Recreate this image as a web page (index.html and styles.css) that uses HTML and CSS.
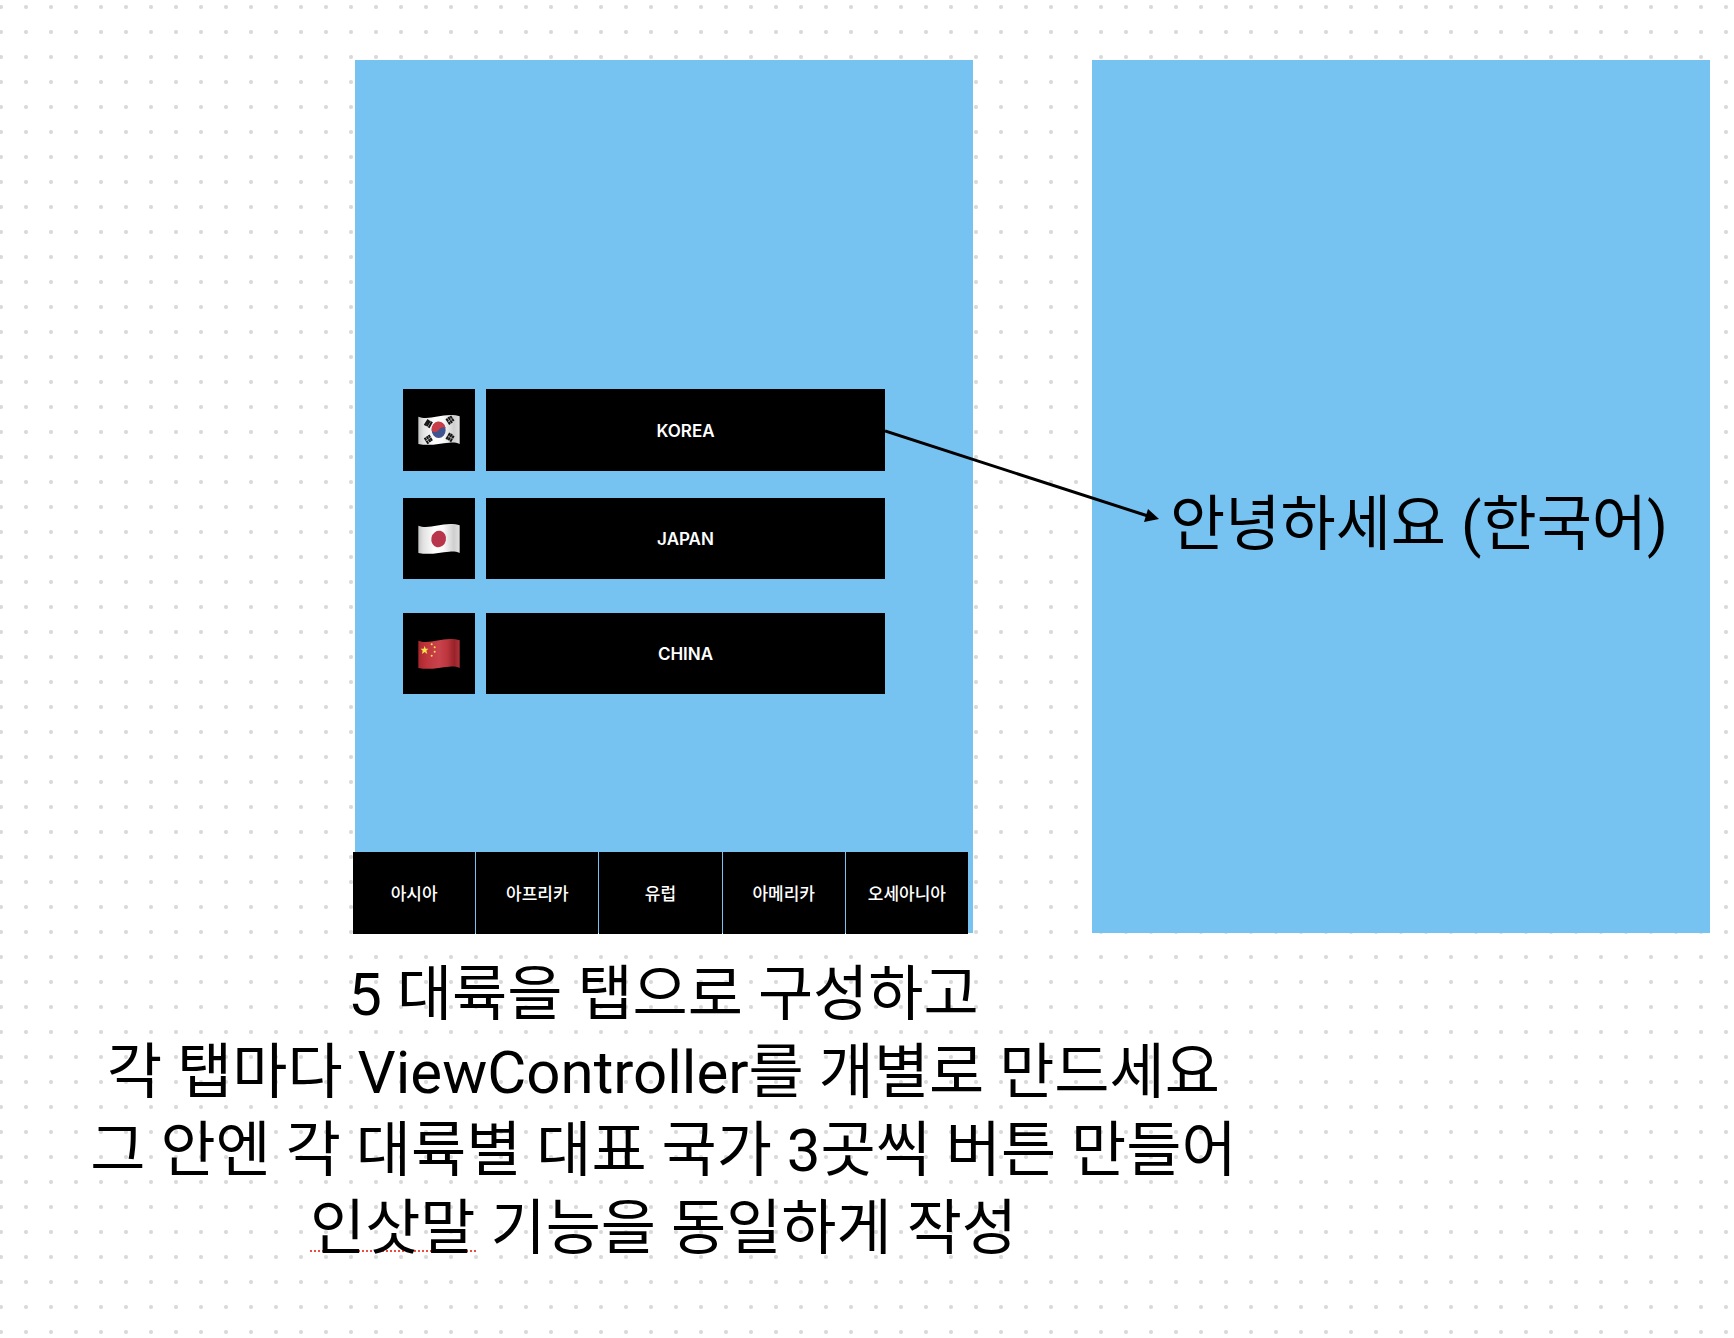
FILE: index.html
```html
<!DOCTYPE html>
<html lang="ko">
<head>
<meta charset="utf-8">
<meta name="viewport" content="width=device-width, initial-scale=1">
<title>5 대륙 인사말</title>
<link rel="stylesheet" href="styles.css">
</head>
<body>
<svg class="defs" aria-hidden="true">
  <defs>
    <linearGradient id="cloth" x1="0" x2="1" y1="0" y2="0">
      <stop offset="0" stop-color="#c4c4c4"/>
      <stop offset=".12" stop-color="#e2e2e2"/>
      <stop offset=".4" stop-color="#ffffff"/>
      <stop offset=".6" stop-color="#fafafa"/>
      <stop offset=".86" stop-color="#cfcfcf"/>
      <stop offset="1" stop-color="#e2e2e2"/>
    </linearGradient>
    <linearGradient id="red-cloth" x1="0" x2="1" y1="0" y2="0">
      <stop offset="0" stop-color="#a8262d"/>
      <stop offset=".2" stop-color="#c0353d"/>
      <stop offset=".5" stop-color="#c9434c"/>
      <stop offset=".7" stop-color="#bd363e"/>
      <stop offset=".87" stop-color="#98222a"/>
      <stop offset="1" stop-color="#b2323a"/>
    </linearGradient>
    <path id="wave" d="M1 5C28 16 62 0 96 0C108 0 118 1 125 4V87C116 83 106 82 94 83C64 85 36 94 1 87Z"/>
  </defs>
</svg>
<main class="board">
  <div class="screens">
    <section class="screen home" aria-label="아시아">
      <ul class="countries">
        <li class="country">
          <span class="flag">
            <svg viewBox="0 0 126 90" role="img" aria-label="대한민국">
              <use href="#wave" fill="url(#cloth)"/>
              <ellipse cx="62" cy="45" rx="21" ry="24" fill="#40558f"/>
              <path d="M41 47A21 24 0 0 1 83 40C77 34 68 37 62 45C56 53 47 53 41 47Z" fill="#c93d49"/>
              <g stroke="#151515" stroke-width="6">
                <path d="M20 31L31 14M26 34L36 17M32 38L42 20"/>
                <path d="M85 11L96 28M91 6L102 24M97 3L107 18"/>
                <path d="M20 68L31 86M26 64L37 81M32 60L42 77"/>
                <path d="M85 73L96 54M91 76L102 57M97 80L107 62"/>
              </g>
              <g stroke="#d4d4d4" stroke-width="2">
                <path d="M89 22L104 9M23 78L40 66M88 62L105 72"/>
              </g>
            </svg>
          </span>
          <button class="name" type="button">KOREA</button>
        </li>
        <li class="country">
          <span class="flag">
            <svg viewBox="0 0 126 90" role="img" aria-label="일본">
              <use href="#wave" fill="url(#cloth)"/>
              <ellipse cx="62" cy="45" rx="22" ry="25" fill="#b8354b" transform="rotate(12 62 45)"/>
            </svg>
          </span>
          <button class="name" type="button">JAPAN</button>
        </li>
        <li class="country">
          <span class="flag">
            <svg viewBox="0 0 126 90" role="img" aria-label="중국">
              <use href="#wave" fill="url(#red-cloth)"/>
              <g fill="#f7e34b">
                <path d="M20 20L23 29L31 29L25 35L28 45L20 39L12 45L14 35L8 29L17 29Z"/>
                <circle cx="41" cy="16" r="3"/>
                <circle cx="50" cy="25" r="3"/>
                <circle cx="50" cy="38" r="3"/>
                <circle cx="41" cy="50" r="3"/>
              </g>
            </svg>
          </span>
          <button class="name" type="button">CHINA</button>
        </li>
      </ul>
      <nav class="tabs" aria-label="대륙">
        <button class="tab" type="button">아시아</button>
        <button class="tab" type="button">아프리카</button>
        <button class="tab" type="button">유럽</button>
        <button class="tab" type="button">아메리카</button>
        <button class="tab" type="button">오세아니아</button>
      </nav>
      <svg class="arrow" viewBox="0 0 280 100" aria-hidden="true">
        <path d="M0 6L263 91" stroke="#000" stroke-width="3" fill="none"/>
        <path d="M263 84L274 94L259 97Z" fill="#000"/>
      </svg>
    </section>
    <section class="screen detail" aria-label="인사말">
      <p class="greeting">안녕하세요 (한국어)</p>
    </section>
  </div>
  <p class="note">
    5 대륙을 탭으로 구성하고<br>
    각 탭마다 ViewController를 개별로 만드세요<br>
    그 안엔 각 대륙별 대표 국가 3곳씩 버튼 만들어<br>
    <span class="typo">인삿말</span> 기능을 동일하게 작성
  </p>
</main>
</body>
</html>
```
FILE: styles.css
```css
* {
  box-sizing: border-box;
}

body {
  margin: 0;
  color: #000;
  font-family: Roboto, "Noto Sans CJK KR", sans-serif;
}

button {
  border: 0;
  padding: 0;
  background: #000;
  color: #fff;
  font: inherit;
}

.defs {
  position: absolute;
  width: 0;
  height: 0;
}

/* 25px dot grid */
.board {
  min-height: 100vh;
  padding-top: 60px;
  background: #fff radial-gradient(circle at 13px 13px, #d9d9d9 1.5px, transparent 2.5px) -12px -6px / 25px 25px;
}

.screens {
  display: flex;
  gap: 119px;
  padding: 0 24px 0 355px;
}

.screen {
  flex: 1;
  min-width: 0;
  min-height: 873px;
  background: #76c2f1;
}

.home {
  position: relative;
  display: flex;
  flex-direction: column;
}

.countries {
  display: flex;
  flex-direction: column;
  gap: 27px;
  margin: 0;
  padding: 329px 88px 0 48px;
  list-style: none;
}

.country {
  display: flex;
  gap: 11px;
  height: 81px;
}

.country:first-child {
  height: 82px;
}

.country:last-child {
  margin-top: 7px;
}

.flag {
  display: flex;
  align-items: center;
  justify-content: center;
  width: 72px;
  background: #000;
}

.flag svg {
  width: 42px;
  height: 30px;
}

.name {
  flex: 1;
  padding-top: 1px;
  font-family: Inter, sans-serif;
  font-size: 17px;
  font-weight: 600;
}

.tabs {
  display: grid;
  grid-template-columns: repeat(5, 1fr);
  gap: 1px;
  height: 82px;
  margin: auto 5px -1px -2px;
}

.tab {
  padding-bottom: 2px;
  font-size: 17px;
  font-weight: 500;
}

.arrow {
  position: absolute;
  top: 365px;
  left: calc(100% - 88px);
  z-index: 1;
  width: 280px;
  height: 100px;
}

.greeting,
.note {
  margin: 0;
  font-size: 60px;
  line-height: 78px;
  text-align: center;
}

.greeting {
  padding: 426px 0 0 36px;
  white-space: nowrap;
}

.note {
  padding: 23px 407px 0 0;
}

/* spelling mark */
.typo {
  background: repeating-linear-gradient(90deg, #ee4b3e 0 2px, transparent 2px 4px) 0 57px / 100% 2px no-repeat;
}
```
